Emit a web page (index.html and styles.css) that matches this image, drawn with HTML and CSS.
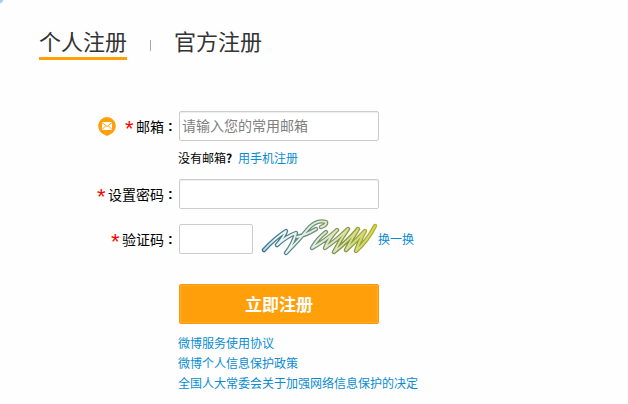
FILE: index.html
```html
<!DOCTYPE html>
<html lang="zh-CN">
<head>
<meta charset="utf-8">
<title>个人注册</title>
<link rel="stylesheet" href="styles.css">
</head>
<body>
<main class="page">
  <nav class="tabs">
    <a class="tab active">个人注册</a>
    <span class="divider"></span>
    <a class="tab">官方注册</a>
  </nav>
  <form class="form">
    <div class="row">
      <label class="label" for="email">
        <svg class="mail" width="18" height="20" viewBox="0 0 18 20"><path d="M9 0a9 9 0 0 1 3 17.400L9 19l-3-1.600A9 9 0 0 1 9 0z" fill="#ffa00a"/><path d="M4 5h10v8H4z" fill="#fff"/><path d="M4 5.500l5 4 5-4M4 12.500L7.500 9M14 12.500L10.500 9" fill="none" stroke="#ffa00a"/></svg>
        <span class="star">*</span><span class="text">邮箱</span><span class="colon">:</span>
      </label>
      <input class="input" id="email" placeholder="请输入您的常用邮箱">
    </div>
    <p class="hint"><span class="question">没有邮箱<b>?</b></span><a>用手机注册</a></p>
    <div class="row password">
      <label class="label" for="password"><span class="star">*</span><span class="text">设置密码</span><span class="colon">:</span></label>
      <input class="input" id="password" type="password">
    </div>
    <div class="row code">
      <label class="label" for="code"><span class="star">*</span><span class="text">验证码</span><span class="colon">:</span></label>
      <input class="input short" id="code">
      <svg class="captcha" width="117" height="42" viewBox="0 0 117 42">
        <defs>
          <linearGradient id="ink" gradientUnits="userSpaceOnUse" x1="0" y1="0" x2="116" y2="0"><stop stop-color="#286f95"/><stop offset=".45" stop-color="#6f9480"/><stop offset=".75" stop-color="#86963c"/><stop offset="1" stop-color="#b4b82c"/></linearGradient>
          <linearGradient id="fill" gradientUnits="userSpaceOnUse" x1="0" y1="0" x2="116" y2="0"><stop stop-color="#a5c9dc"/><stop offset=".15" stop-color="#f1f6f8"/><stop offset=".5" stop-color="#e0e9dc"/><stop offset=".75" stop-color="#d8de9c"/><stop offset="1" stop-color="#cfd454"/></linearGradient>
          <path id="scribble" d="M4 35Q14 24 26 16Q24 22 17 30Q27 21 36 18Q33 29 26 38Q39 25 47 15Q56 4 66 7Q67 10 61 12M37 22Q46 20 56 14M66 17Q57 24 52 33Q65 26 77 15Q69 23 65 33Q77 25 88 14Q80 25 74 37Q88 26 98 14Q92 23 86 35Q97 25 105 16Q99 27 96 36Q108 25 115 11"/>
        </defs>
        <g fill="none" stroke-linecap="round" stroke-linejoin="round">
          <use href="#scribble" stroke="url(#ink)" stroke-width="4.400"/>
          <use href="#scribble" stroke="url(#fill)" stroke-width="1.900"/>
        </g>
      </svg>
      <a class="refresh">换一换</a>
    </div>
    <button class="submit" type="button">立即注册</button>
    <div class="links"><a>微博服务使用协议</a><a>微博个人信息保护政策</a><a>全国人大常委会关于加强网络信息保护的决定</a></div>
  </form>
</main>
</body>
</html>
```
FILE: styles.css
```css
* { box-sizing: border-box; }
body { margin: 0; min-height: 100vh; background: radial-gradient(circle at 0 0, #9ccbf0 0 2px, transparent 4px) no-repeat, #fefefe; font: 12px/20px "Noto Sans CJK SC", sans-serif; color: #000; }
.page { padding: 27px 0 0 39px; }
.tabs { display: flex; height: 33px; }
.tab { font-size: 22px; line-height: 26px; color: #333; height: 33px; }
.tab.active { border-bottom: 3px solid #ffa00a; }
.divider { width: 1px; height: 11px; margin: 13px 23px 0; background: #b99bb9; }
.form { padding-top: 51px; }
.row { display: flex; align-items: center; height: 30px; }
.label { display: flex; align-items: center; justify-content: flex-end; width: 140px; font-size: 14px; }
.mail { margin: 2px 9px 0 0; }
.star { width: 9px; height: 20px; margin-right: 2px; color: red; font: 22px/26px "Liberation Sans", sans-serif; }
.text { line-height: 18px; padding-bottom: 1px; }
.colon { width: 15px; padding-left: 4px; font: bold 14px/18px "Liberation Sans", sans-serif; }
.input { width: 200px; height: 30px; border: 1px solid #ccc; border-radius: 2px; padding: 0 2px 2px; background: #fff; font: 14px "Noto Sans CJK SC", sans-serif; outline: 0; }
.input:not(.short) { box-shadow: inset 0 1px 1px #eee; }
.input::placeholder { color: #808080; opacity: 1; }
.input.short { width: 74px; }
.hint { margin: 7px 0 0 139px; height: 20px; display: flex; }
.question { width: 60px; }
a { color: #0a8cd2; }
.password { margin-top: 11px; }
.code { margin-top: 15px; }
.captcha { margin: -6px 1px 0 7px; }
.submit { display: block; width: 200px; height: 40px; margin: 30px 0 9px 140px; padding: 0 0 2px; border: 1px solid #ff960a; border-radius: 2px; background: #ffa00a; box-shadow: inset 0 0 0 1px #ffad2b; color: #fff; font: bold 17px "Noto Sans CJK SC", sans-serif; }
.links { margin-left: 139px; display: flex; flex-direction: column; }
```
